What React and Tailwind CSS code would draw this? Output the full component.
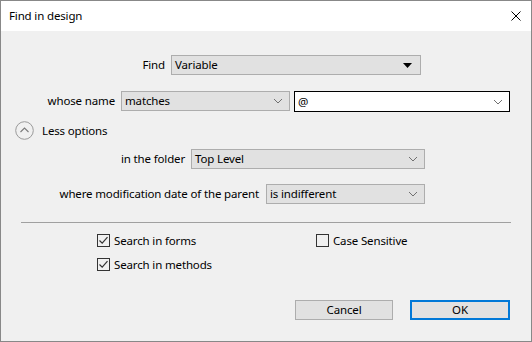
import { useState } from "react";

const font = { fontFamily: '"Segoe UI", "Noto Sans", sans-serif' };

function Chevron() {
  return (
    <svg width="10" height="6" viewBox="0 0 10 6" className="shrink-0">
      <path d="M1 1 L5 5 L9 1" fill="none" stroke="#707070" strokeWidth="1" />
    </svg>
  );
}

function Select({ value, width, arrow = "chevron" }) {
  return (
    <div
      className="h-[20px] flex items-center justify-between bg-[#e1e1e1] border border-[#adadad] pl-[3px] pr-[6px] text-black"
      style={{ width }}
    >
      <span className="leading-none">{value}</span>
      {arrow === "chevron" ? (
        <Chevron />
      ) : (
        <svg width="9" height="5" viewBox="0 0 9 5" className="shrink-0 mr-[2px]">
          <path d="M0 0 L9 0 L4.5 5 Z" fill="#000" />
        </svg>
      )}
    </div>
  );
}

function Checkbox({ checked, label }) {
  return (
    <div className="flex items-center h-[13px]">
      <div className="w-[13px] h-[13px] border border-[#333] bg-[#f0f0f0] flex items-center justify-center">
        {checked && (
          <svg width="11" height="11" viewBox="0 0 11 11">
            <path d="M1.5 5.5 L4.2 8.2 L9.5 2.2" fill="none" stroke="#333" strokeWidth="1.2" />
          </svg>
        )}
      </div>
      <span className="ml-[4px] leading-none">{label}</span>
    </div>
  );
}

export default function App() {
  const [forms] = useState(true);
  const [methods] = useState(true);

  return (
    <div className="w-[532px] h-[342px] border border-[#888] bg-[#f0f0f0] text-[11.5px] tracking-[-0.15px] text-black flex flex-col overflow-hidden" style={font}>
      <div className="h-[30px] bg-white flex items-center justify-between pl-[8px] pr-[10px] shrink-0">
        <span>Find in design</span>
        <svg width="10" height="10" viewBox="0 0 10 10">
          <path d="M0.5 0.5 L9.5 9.5 M9.5 0.5 L0.5 9.5" stroke="#000" strokeWidth="1" />
        </svg>
      </div>

      <div className="flex flex-col">
        <div className="flex items-center mt-[24px] h-[20px]">
          <div className="w-[164px] text-right">Find</div>
          <div className="ml-[6px]">
            <Select value="Variable" width={250} arrow="triangle" />
          </div>
        </div>

        <div className="flex items-start mt-[16px] h-[21px]">
          <div className="w-[114px] text-right h-[20px] flex items-center justify-end">whose name</div>
          <div className="ml-[6px]">
            <Select value="matches" width={169} />
          </div>
          <div className="ml-[4px] w-[216px] h-[21px] bg-white border border-black flex items-center justify-between pl-[3px] pr-[6px]">
            <span className="leading-none">@</span>
            <Chevron />
          </div>
        </div>

        <div className="flex items-center mt-[9px] h-[19px] pl-[14px]">
          <svg width="19" height="19" viewBox="0 0 19 19">
            <circle cx="9.5" cy="9.5" r="8.8" fill="#f0f0f0" stroke="#9a9a9a" strokeWidth="1" />
            <path d="M5.5 11 L9.5 7 L13.5 11" fill="none" stroke="#7a7a7a" strokeWidth="1.1" />
          </svg>
          <span className="ml-[8px]">Less options</span>
        </div>

        <div className="flex items-center mt-[9px] h-[20px]">
          <div className="w-[184px] text-right">in the folder</div>
          <div className="ml-[6px]">
            <Select value="Top Level" width={234} />
          </div>
        </div>

        <div className="flex items-center mt-[15px] h-[20px]">
          <div className="w-[258px] text-right">where modification date of the parent</div>
          <div className="ml-[7px]">
            <Select value="is indifferent" width={159} />
          </div>
        </div>

        <div className="mt-[18px] ml-[20px] w-[490px] h-px bg-[#a0a0a0]" />

        <div className="flex mt-[11px] pl-[96px]">
          <div className="w-[219px]">
            <Checkbox checked={forms} label="Search in forms" />
          </div>
          <Checkbox checked={false} label="Case Sensitive" />
        </div>
        <div className="flex mt-[11px] pl-[96px]">
          <Checkbox checked={methods} label="Search in methods" />
        </div>

        <div className="flex mt-[29px] pl-[294px]">
          <button className="w-[98px] h-[20px] bg-[#e1e1e1] border border-[#adadad] flex items-center justify-center leading-none">
            Cancel
          </button>
          <button className="ml-[17px] w-[100px] h-[20px] bg-[#e1e1e1] border-2 border-[#0078d7] flex items-center justify-center leading-none">
            OK
          </button>
        </div>
      </div>
    </div>
  );
}
